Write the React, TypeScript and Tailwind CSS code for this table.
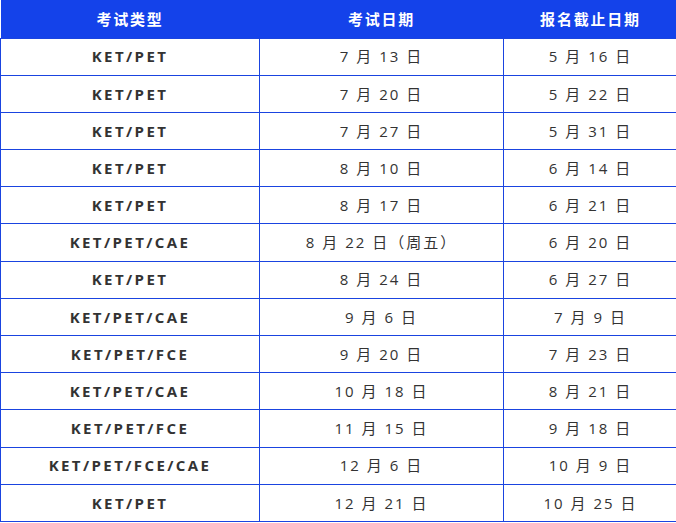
const rows: [string, string, string][] = [
  ['KET/PET', '7 月 13 日', '5 月 16 日'],
  ['KET/PET', '7 月 20 日', '5 月 22 日'],
  ['KET/PET', '7 月 27 日', '5 月 31 日'],
  ['KET/PET', '8 月 10 日', '6 月 14 日'],
  ['KET/PET', '8 月 17 日', '6 月 21 日'],
  ['KET/PET/CAE', '8 月 22 日（周五）', '6 月 20 日'],
  ['KET/PET', '8 月 24 日', '6 月 27 日'],
  ['KET/PET/CAE', '9 月 6 日', '7 月 9 日'],
  ['KET/PET/FCE', '9 月 20 日', '7 月 23 日'],
  ['KET/PET/CAE', '10 月 18 日', '8 月 21 日'],
  ['KET/PET/FCE', '11 月 15 日', '9 月 18 日'],
  ['KET/PET/FCE/CAE', '12 月 6 日', '10 月 9 日'],
  ['KET/PET', '12 月 21 日', '10 月 25 日'],
];

export default function App() {
  return (
    <div className="w-[676px] h-[523px] overflow-hidden bg-white font-['Open_Sans','Noto_Sans_CJK_SC',sans-serif]">
      <table className="w-[677px] border-collapse table-fixed text-[15px] text-[#333]">
        <colgroup>
          <col className="w-[259px]" />
          <col className="w-[244px]" />
          <col className="w-[174px]" />
        </colgroup>
        <thead>
          <tr className="bg-[#1442ea] text-white h-[38px]">
            <th className="font-bold tracking-[1.8px]">考试类型</th>
            <th className="font-bold tracking-[1.8px]">考试日期</th>
            <th className="font-bold tracking-[1.8px]">报名截止日期</th>
          </tr>
        </thead>
        <tbody>
          {rows.map(([type, date, deadline], i) => (
            <tr key={i} className="h-[37.2px]">
              <td className="border border-[#1a44e0] text-center font-bold tracking-[2.4px]">{type}</td>
              <td className="border border-[#1a44e0] text-center tracking-[2px]">{date}</td>
              <td className="border border-[#1a44e0] text-center tracking-[2px]">{deadline}</td>
            </tr>
          ))}
        </tbody>
      </table>
    </div>
  );
}
